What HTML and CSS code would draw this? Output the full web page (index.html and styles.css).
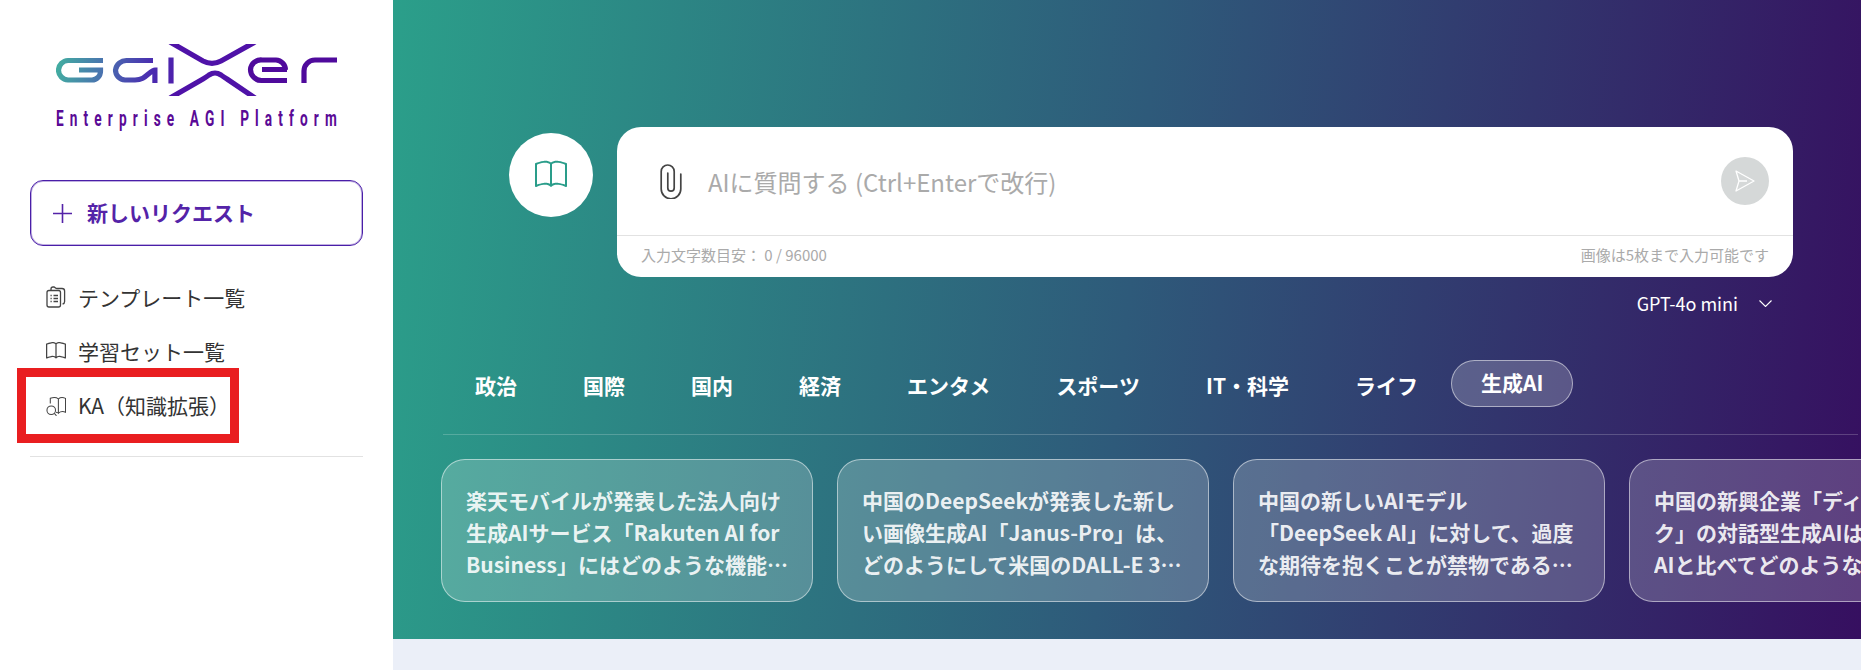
FILE: index.html
```html
<!DOCTYPE html>
<html lang="ja">
<head>
<meta charset="utf-8">
<title>GaiXer</title>
<link rel="stylesheet" href="styles.css">
</head>
<body>
<div class="app">
  <aside class="sidebar">
    <div class="brand">
      <svg class="logo" width="284" height="52" viewBox="56 44 284 52" fill="none" role="img" aria-label="GaiXer">
        <defs>
          <linearGradient id="lg" gradientUnits="userSpaceOnUse" x1="56" y1="58" x2="180" y2="84">
            <stop offset="0" stop-color="#42b0a0"/>
            <stop offset="0.4" stop-color="#4a6fb0"/>
            <stop offset="0.75" stop-color="#4a2db0"/>
            <stop offset="1" stop-color="#4f1cab"/>
          </linearGradient>
        </defs>
        <g stroke="url(#lg)" stroke-width="5.2">
          <path d="M103 60.500H68a10 10 0 0 0-9.500 9.500a10 10 0 0 0 9.500 10H92a8.700 8.700 0 0 0 8.500-8.700v-1.300H79"/>
          <path d="M153 60.500H127a11 11 0 0 0-11.500 9.500a10 10 0 0 0 9.500 10h10c7 0 10-3 14-6.500c3-2.500 4.500-3.500 5.900-3.500V83"/>
          <path d="M171 57.500V83.500"/>
        </g>
        <g stroke="#4f12a8" stroke-width="5.2">
          <path d="M170 42L203 61q9 4.800 18 0L255 42"/>
          <path d="M170 98L203 79q3-1.800 6-4q3-2 6-2t6 2q3 2.200 6 4L255 98"/>
        </g>
        <g stroke="#4f0a9c" stroke-width="5.2">
          <path d="M287 69.500H262M287 80.500H262a11 11 0 0 1-11.500-11a10.500 10.500 0 0 1 11.500-9.500h14a10 10 0 0 1 9.500 9.700"/>
          <path d="M304 83V71a11 11 0 0 1 11-11h22"/>
        </g>
      </svg>
      <div class="tagline">Enterprise AGI Platform</div>
    </div>

    <button class="new-request" type="button">
      <svg width="19" height="19" viewBox="0 0 19 19" fill="none" stroke="currentColor" stroke-width="1.600"><path d="M9.500 0V19M0 9.500H19"/></svg>
      <span>新しいリクエスト</span>
    </button>

    <nav class="nav">
      <a class="nav-item">
        <svg class="nav-icon" width="20" height="22" viewBox="0 0 20 22" fill="none" stroke="#444" stroke-width="1.300">
          <path d="M5 4.500H3a2 2 0 0 0-2 2V19a2 2 0 0 0 2 2h9.500a2 2 0 0 0 2-2"/>
          <path d="M5 4.500V3a2 2 0 0 1 2-2h1c1 0 1.500 1.500 3 1.500h5a2.600 2.600 0 0 1 2.600 2.600v10.400a2.500 2.500 0 0 1-2 2.500"/>
          <path d="M5 4.500h7.500a2 2 0 0 1 2 2V19"/>
          <path d="M4.500 9.500h1.200M7.500 9.500h4.500M4.500 12.500h1.200M7.500 12.500h4.500M4.500 15.500h1.200M7.500 15.500h4.500"/>
        </svg>
        <span>テンプレート一覧</span>
      </a>
      <a class="nav-item">
        <svg class="nav-icon" width="20" height="20" viewBox="0 0 16 16" fill="#444"><path d="M1 2.828c.885-.37 2.154-.769 3.388-.893 1.33-.134 2.458.063 3.112.752v9.746c-.935-.53-2.12-.603-3.213-.493-1.18.12-2.37.461-3.287.811V2.828zm7.500-.141c.654-.689 1.782-.886 3.112-.752 1.234.124 2.503.523 3.388.893v9.923c-.918-.35-2.107-.692-3.287-.81-1.094-.111-2.278-.039-3.213.492V2.687zM8 1.783C7.015.936 5.587.81 4.287.94c-1.514.153-3.042.672-3.994 1.105A.5.5 0 0 0 0 2.500v11a.5.5 0 0 0 .707.455c.882-.4 2.303-.881 3.680-1.020 1.409-.142 2.590.087 3.223.877a.5.5 0 0 0 .780 0c.633-.790 1.814-1.019 3.222-.877 1.378.139 2.800.620 3.681 1.020A.5.5 0 0 0 16 13.500v-11a.5.5 0 0 0-.293-.455c-.952-.433-2.480-.952-3.994-1.105C10.413.809 8.985.936 8 1.783z"/></svg>
        <span>学習セット一覧</span>
      </a>
      <a class="nav-item">
        <svg class="nav-icon" width="20" height="21" viewBox="0 0 21 22" fill="none" stroke="#444" stroke-width="1.100">
          <path d="M4.500 9V3.500c2.800-1 6-1.300 8.500.5V19c-.8-.6-1.500-.8-2.500-1"/>
          <path d="M13 4c2.300-1.800 5.400-1.500 7.500-.5V18c-2.500-1-5-1-7.500 1"/>
          <circle cx="5.500" cy="16" r="4.500"/>
          <path d="M8.800 19.200L11 21.800"/>
        </svg>
        <span>KA（知識拡張）</span>
      </a>
      <div class="highlight"></div>
    </nav>
    <hr class="side-rule">
  </aside>

  <main class="main">
    <section class="hero">
      <div class="composer">
        <div class="mode-circle">
          <svg width="32" height="32" viewBox="0 0 16 16" fill="#2a9d8a"><path d="M1 2.828c.885-.37 2.154-.769 3.388-.893 1.33-.134 2.458.063 3.112.752v9.746c-.935-.53-2.12-.603-3.213-.493-1.18.12-2.37.461-3.287.811V2.828zm7.500-.141c.654-.689 1.782-.886 3.112-.752 1.234.124 2.503.523 3.388.893v9.923c-.918-.35-2.107-.692-3.287-.81-1.094-.111-2.278-.039-3.213.492V2.687zM8 1.783C7.015.936 5.587.81 4.287.94c-1.514.153-3.042.672-3.994 1.105A.5.5 0 0 0 0 2.500v11a.5.5 0 0 0 .707.455c.882-.4 2.303-.881 3.680-1.020 1.409-.142 2.590.087 3.223.877a.5.5 0 0 0 .780 0c.633-.790 1.814-1.019 3.222-.877 1.378.139 2.800.620 3.681 1.020A.5.5 0 0 0 16 13.500v-11a.5.5 0 0 0-.293-.455c-.952-.433-2.480-.952-3.994-1.105C10.413.809 8.985.936 8 1.783z"/></svg>
        </div>
        <div class="input-card">
          <div class="input-row">
            <svg class="clip" width="22" height="35" viewBox="0 0 22 35" fill="none" stroke="#444" stroke-width="1.700" stroke-linecap="round">
              <path d="M20.800 10V25a9.800 9.800 0 0 1-19.600 0V7.500a6.500 6.500 0 0 1 13 0V24a3.200 3.200 0 0 1-6.400 0V9"/>
            </svg>
            <div class="placeholder">AIに質問する (Ctrl+Enterで改行)</div>
            <div class="send">
              <svg width="20" height="22" viewBox="0 0 20 22" fill="none" stroke="#fff" stroke-width="1.300" stroke-linejoin="round"><path d="M1 1L19 11L1 21L4 11ZM4 11H12"/></svg>
            </div>
          </div>
          <div class="input-foot">
            <span>入力文字数目安： 0 / 96000</span>
            <span>画像は5枚まで入力可能です</span>
          </div>
        </div>
      </div>

      <div class="model">
        <span>GPT-4o mini</span>
        <svg width="13" height="7" viewBox="0 0 13 7" fill="none" stroke="#fff" stroke-width="1.100"><path d="M.5.5L6.500 6.500L12.500.5"/></svg>
      </div>

      <div class="tabs">
        <div class="tab">政治</div>
        <div class="tab">国際</div>
        <div class="tab">国内</div>
        <div class="tab">経済</div>
        <div class="tab">エンタメ</div>
        <div class="tab">スポーツ</div>
        <div class="tab">IT・科学</div>
        <div class="tab">ライフ</div>
        <div class="tab tab-active">生成AI</div>
      </div>
      <div class="hero-rule"></div>

      <div class="cards">
        <div class="card"><p>楽天モバイルが発表した法人向け生成AIサービス「Rakuten AI for Business」にはどのような機能や特徴がありますか？</p></div>
        <div class="card"><p>中国のDeepSeekが発表した新しい画像生成AI「Janus-Pro」は、どのようにして米国のDALL-E 3を上回る性能を実現したのですか？</p></div>
        <div class="card"><p>中国の新しいAIモデル「DeepSeek AI」に対して、過度な期待を抱くことが禁物である理由は何ですか？</p></div>
        <div class="card"><p>中国の新興企業「ディープシーク」の対話型生成AIは、米国製のAIと比べてどのような特徴がありますか？</p></div>
      </div>
    </section>
  </main>
</div>
</body>
</html>
```
FILE: styles.css
```css
* { box-sizing: border-box; }
html, body { margin: 0; height: 100%; }
body {
  background: #ebeff8;
  color: #333;
  font-family: "Noto Sans CJK JP", "Noto Sans", sans-serif;
  text-spacing-trim: space-all;
  overflow: hidden;
}
.app { display: flex; height: 670px; }

/* Sidebar */
.sidebar {
  flex: 0 0 393px;
  min-width: 0;
  background: #fff;
  padding: 44px 30px 0;
}
.brand { margin-left: 26px; }
.logo { display: block; }
.tagline {
  margin-top: 10px;
  width: 460px;
  height: 26px;
  font-family: "Roboto", sans-serif;
  font-size: 22px;
  font-weight: 700;
  line-height: 26px;
  letter-spacing: 9.9px;
  color: #5a0a96;
  white-space: nowrap;
  transform: scaleX(0.62);
  transform-origin: left center;
}
.new-request {
  display: flex;
  align-items: center;
  gap: 15px;
  width: 333px;
  height: 66px;
  margin-top: 48px;
  padding: 0 0 2px 22px;
  background: #fff;
  border: 1px solid #4a1ea8;
  box-shadow: inset 0 0 0 1px rgba(74, 30, 168, 0.35);
  border-radius: 13px;
  color: #5423a8;
  font: inherit;
  font-size: 21px;
  font-weight: 700;
}
.new-request svg { margin-top: 2px; }
.nav { position: relative; margin-top: 24px; }
.nav-item {
  display: flex;
  align-items: center;
  height: 54px;
  padding-left: 16px;
  font-size: 21px;
  color: #333;
}
.nav-icon { flex: 0 0 20px; margin-right: 12px; }
.highlight {
  position: absolute;
  left: -13px;
  top: 98px;
  width: 222px;
  height: 75px;
  border: 9px solid #e91e20;
}
.side-rule {
  margin: 24px 0 0;
  border: 0;
  border-top: 1px solid #e2e2e2;
}

/* Main */
.main { flex: 1; min-width: 0; }
.hero {
  height: 639px;
  overflow: hidden;
  padding-top: 127px;
  background: linear-gradient(96deg, #2b9f8a 0%, #2e5a7a 50%, #360f60 100%);
  color: #fff;
}
.composer { display: flex; gap: 24px; padding-left: 116px; }
.mode-circle {
  flex: 0 0 84px;
  height: 84px;
  margin-top: 6px;
  border-radius: 50%;
  background: #fff;
  display: flex;
  align-items: center;
  justify-content: center;
}
.input-card {
  flex: 0 0 1176px;
  height: 150px;
  background: #fff;
  border-radius: 24px;
}
.input-row {
  display: flex;
  align-items: center;
  height: 109px;
  border-bottom: 1px solid #e2e2e2;
  padding: 0 24px 0 43px;
}
.clip { flex: 0 0 22px; margin-right: 26px; }
.placeholder {
  flex: 1;
  font-size: 24px;
  color: #aaa;
}
.send {
  flex: 0 0 48px;
  height: 48px;
  border-radius: 50%;
  background: #d5d8d8;
  display: flex;
  align-items: center;
  justify-content: center;
}
.input-foot {
  display: flex;
  justify-content: space-between;
  align-items: center;
  height: 40px;
  padding: 0 24px 4px;
  font-size: 15px;
  color: #aaa;
}
.model {
  display: flex;
  justify-content: flex-end;
  align-items: center;
  gap: 21px;
  height: 24px;
  margin-top: 14px;
  padding-right: 89px;
  font-size: 18px;
}
.tabs { display: flex; height: 47px; margin: 45px 0 0 49px; }
.tab {
  padding: 2px 33px 0;
  font-size: 21px;
  font-weight: 700;
  line-height: 47px;
  white-space: nowrap;
}
.tab-active {
  padding: 0 29px 2px;
  line-height: 43px;
  border: 1px solid rgba(255, 255, 255, 0.5);
  border-radius: 24px;
  background: rgba(255, 255, 255, 0.2);
}
.hero-rule {
  height: 1px;
  margin: 27px 3px 0 50px;
  background: rgba(255, 255, 255, 0.2);
}
.cards { display: flex; gap: 24px; margin: 24px 0 0 48px; }
.card {
  flex: 0 0 372px;
  height: 143px;
  padding: 24px 24px 0;
  border: 1px solid rgba(255, 255, 255, 0.5);
  border-radius: 24px;
  background: rgba(255, 255, 255, 0.2);
}
.card p {
  margin: 0;
  font-size: 21px;
  font-weight: 700;
  line-height: 32px;
  color: rgba(255, 255, 255, 0.9);
  display: -webkit-box;
  -webkit-box-orient: vertical;
  -webkit-line-clamp: 3;
  overflow: hidden;
}
```
